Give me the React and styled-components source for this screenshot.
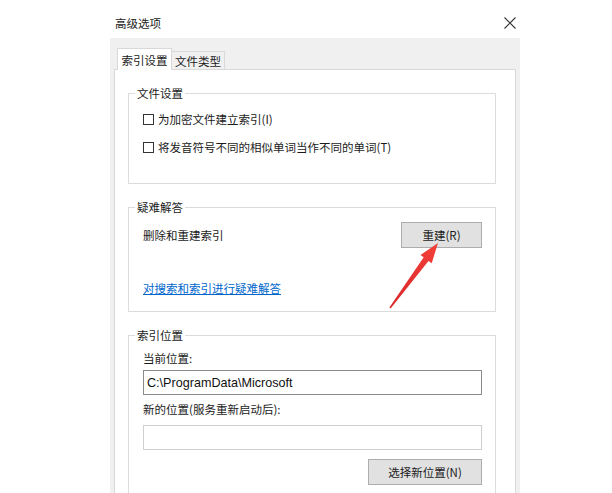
import React from "react";
import styled, { createGlobalStyle } from "styled-components";

const GlobalStyle = createGlobalStyle`
  html, body {
    margin: 0;
    padding: 0;
    background: #ffffff;
  }
  body {
    font-family: "Noto Sans CJK SC", "Liberation Sans", sans-serif;
    font-size: 11.5px;
    color: #1b1b1b;
    overflow: hidden;
  }
`;

const Page = styled.div`
  position: relative;
  width: 612px;
  height: 493px;
  overflow: hidden;
`;

const Dialog = styled.div`
  margin-left: 110px;
  width: 410px;
`;

const TitleBar = styled.div`
  height: 38px;
  display: flex;
  align-items: center;
  justify-content: space-between;
  padding: 8px 4px 0 5px;
  box-sizing: border-box;
`;

const Title = styled.span`
  font-size: 11.5px;
  line-height: 14px;
  color: #222;
`;

const CloseButton = styled.div`
  width: 12px;
  height: 12px;
  display: flex;
`;

const Body = styled.div`
  background: #f0f0f0;
  height: 455px;
  padding: 10px 4px 0;
  box-sizing: border-box;
`;

const TabList = styled.div`
  display: flex;
  align-items: flex-end;
  padding-left: 3px;
`;

const Tab = styled.div`
  position: relative;
  z-index: ${({ $active }) => ($active ? 2 : 1)};
  box-sizing: border-box;
  width: ${({ $width }) => $width}px;
  height: ${({ $active }) => ($active ? 22 : 18)}px;
  margin-bottom: ${({ $active }) => ($active ? -1 : 0)}px;
  background: ${({ $active }) => ($active ? "#ffffff" : "#f0f0f0")};
  border: 1px solid #d9d9d9;
  border-bottom: none;
  border-left: ${({ $active }) => ($active ? "1px solid #d9d9d9" : "none")};
  display: flex;
  align-items: center;
  justify-content: center;
  font-size: 11.5px;
  line-height: 14px;
`;

const TabPanel = styled.div`
  position: relative;
  z-index: 1;
  background: #ffffff;
  border: 1px solid #d9d9d9;
  border-bottom: none;
  height: 440px;
  box-sizing: border-box;
  padding: 16px 19px 0 13px;
  display: flex;
  flex-direction: column;
  gap: 16px;
`;

const Group = styled.fieldset`
  margin: 0;
  min-width: 0;
  border: 1px solid #dcdcdc;
  padding: 0;
`;

const Legend = styled.legend`
  margin-left: 6px;
  padding: 0 2px;
  font-size: 11.5px;
  line-height: 14px;
`;

const GroupBody = styled.div`
  padding: ${({ $pad }) => $pad};
`;

const CheckList = styled.div`
  display: flex;
  flex-direction: column;
  gap: 8px;
`;

const CheckRow = styled.label`
  display: flex;
  align-items: center;
  gap: 4px;
  height: 20px;
  line-height: 14px;
`;

const Box = styled.span`
  width: 11px;
  height: 11px;
  border: 1px solid #333;
  background: #fff;
  box-sizing: border-box;
  flex: none;
`;

const ActionRow = styled.div`
  display: flex;
  align-items: center;
  justify-content: ${({ $end }) => ($end ? "flex-end" : "space-between")};
  margin-top: ${({ $mt }) => $mt || 0}px;
`;

const Text = styled.span`
  line-height: 16px;
`;

const Button = styled.div`
  box-sizing: border-box;
  width: ${({ $width }) => $width}px;
  height: 26px;
  background: #e1e1e1;
  border: 1px solid #adadad;
  display: flex;
  align-items: center;
  justify-content: center;
  font-size: 11.5px;
  color: #1b1b1b;
`;

const Link = styled.a`
  display: block;
  margin-top: 32px;
  line-height: 16px;
  color: #0066cc;
  text-decoration: underline;
  width: max-content;
`;

const FieldLabel = styled.div`
  line-height: 16px;
  margin-top: ${({ $mt }) => $mt || 0}px;
`;

const Input = styled.div`
  box-sizing: border-box;
  height: 25px;
  margin-top: ${({ $mt }) => $mt}px;
  border: 1px solid ${({ $dim }) => ($dim ? "#cfcfcf" : "#8a8a8a")};
  background: #fff;
  display: flex;
  align-items: center;
  padding-left: 3px;
  font-family: "Liberation Sans", Arial, sans-serif;
  font-size: 12.6px;
  color: #111;
`;

const Overlay = styled.svg`
  position: absolute;
  z-index: 10;
  left: 0;
  top: 0;
  pointer-events: none;
`;

export default function App() {
  return (
    <Page>
      <GlobalStyle />
      <Dialog>
        <TitleBar>
          <Title>高级选项</Title>
          <CloseButton>
            <svg width="12" height="12" viewBox="0 0 12 12">
              <path d="M0.5 0.5 L11.5 11.5 M11.5 0.5 L0.5 11.5" stroke="#333" strokeWidth="1.1" fill="none" />
            </svg>
          </CloseButton>
        </TitleBar>
        <Body>
          <TabList>
            <Tab $active $width={55}>索引设置</Tab>
            <Tab $width={53}>文件类型</Tab>
          </TabList>
          <TabPanel>
            <Group>
              <Legend>文件设置</Legend>
              <GroupBody $pad="9px 0 26px 14px">
                <CheckList>
                  <CheckRow>
                    <Box />
                    为加密文件建立索引(I)
                  </CheckRow>
                  <CheckRow>
                    <Box />
                    将发音符号不同的相似单词当作不同的单词(T)
                  </CheckRow>
                </CheckList>
              </GroupBody>
            </Group>

            <Group>
              <Legend>疑难解答</Legend>
              <GroupBody $pad="8px 13px 15px 14px">
                <ActionRow>
                  <Text>删除和重建索引</Text>
                  <Button $width={81}>重建(R)</Button>
                </ActionRow>
                <Link>对搜索和索引进行疑难解答</Link>
              </GroupBody>
            </Group>

            <Group>
              <Legend>索引位置</Legend>
              <GroupBody $pad="8px 13px 20px 14px">
                <FieldLabel>当前位置:</FieldLabel>
                <Input $mt={4}>C:\ProgramData\Microsoft</Input>
                <FieldLabel $mt={6}>新的位置(服务重新启动后):</FieldLabel>
                <Input $mt={8} $dim />
                <ActionRow $end $mt={9}>
                  <Button $width={114}>选择新位置(N)</Button>
                </ActionRow>
              </GroupBody>
            </Group>
          </TabPanel>
        </Body>
      </Dialog>
      <Overlay width="612" height="493" viewBox="0 0 612 493">
        <defs>
          <linearGradient id="arrowFill" x1="390" y1="308" x2="438" y2="243" gradientUnits="userSpaceOnUse">
            <stop offset="0" stopColor="#d8262a" />
            <stop offset="1" stopColor="#f4413a" />
          </linearGradient>
        </defs>
        <polygon
          points="438,243 431.7,263.3 428.5,260.9 390.6,308.4 389.4,307.6 423.7,257.3 420.5,254.9"
          fill="url(#arrowFill)"
        />
      </Overlay>
    </Page>
  );
}
